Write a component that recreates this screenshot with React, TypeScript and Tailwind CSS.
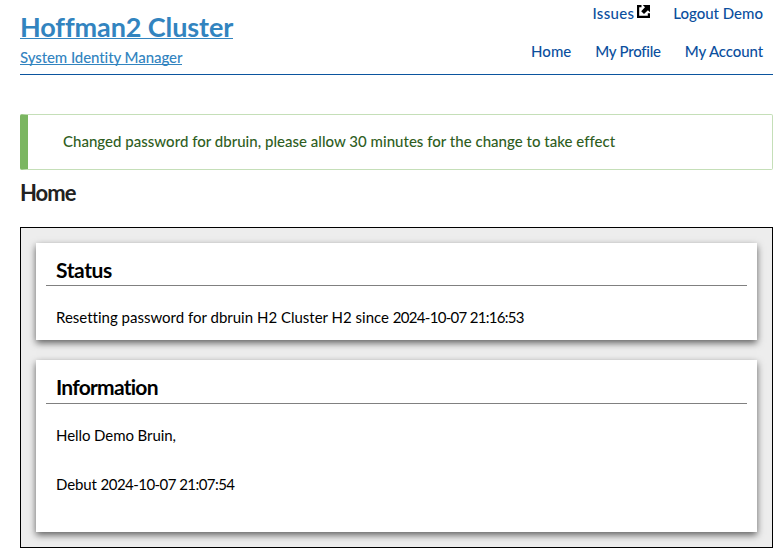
import type { ReactNode } from "react";

function NavLink({ children, className = "" }: { children: ReactNode; className?: string }) {
  return (
    <a href="#" className={`whitespace-nowrap text-[15px] leading-6 font-medium text-[#0b4f9e] ${className}`}>
      {children}
    </a>
  );
}

function ExternalIcon() {
  return (
    <svg width="13" height="13" viewBox="0 0 13 13" className="shrink-0" fill="none" stroke="#000">
      <path d="M4.5 1.1H1.1v10.8h10.8V8.2" strokeWidth="2.2" />
      <path d="M5.8 0H13v7.2L10.9 5.2 7 9 4.2 6.2 8 2.3z" fill="#000" stroke="none" />
    </svg>
  );
}

function Card({ title, titleClass, className, children }: { title: string; titleClass: string; className: string; children: ReactNode }) {
  return (
    <section className={`bg-white px-2.5 shadow-[0_3px_7px_rgba(0,0,0,0.6)] ${className}`}>
      <h2 className={`border-b border-[#808080] pl-2.5 text-[21px] font-bold text-black ${titleClass}`}>{title}</h2>
      {children}
    </section>
  );
}

export default function App() {
  return (
    <div className="h-[555px] overflow-hidden bg-white pr-2.5 pl-5 font-['Lato','Liberation_Sans',sans-serif]">
      <header className="flex h-[75px] justify-between border-b border-[#0b559f]">
        <div className="flex flex-col items-start pt-[9px] text-[#3284bf]">
          <a href="#" className="h-[30px] border-b border-[#3284bf] text-[27px] leading-9 font-bold tracking-[-0.1px] whitespace-nowrap">
            Hoffman2 Cluster
          </a>
          <a href="#" className="mt-1.5 h-5 border-b border-[#3284bf] text-[15px] leading-6 font-medium tracking-[-0.08px] whitespace-nowrap">
            System Identity Manager
          </a>
        </div>
        <nav className="flex flex-col items-end pt-px pr-2.5">
          <div className="flex gap-[23px]">
            <div className="flex gap-[3px]">
              <NavLink className="tracking-[0.3px]">Issues</NavLink>
              <span className="pt-1">
                <ExternalIcon />
              </span>
            </div>
            <NavLink>Logout Demo</NavLink>
          </div>
          <div className="mt-3.5 flex gap-6">
            <NavLink>Home</NavLink>
            <NavLink className="tracking-[-0.25px]">My Profile</NavLink>
            <NavLink className="tracking-[-0.1px]">My Account</NavLink>
          </div>
        </nav>
      </header>

      <div className="mt-[39px] h-14 rounded-xs border border-l-8 border-[#c5dfb8] border-l-[#7bb661] pt-3.5 pl-[35px] text-[15px] leading-6 font-medium tracking-[0.02px] text-[#2f5e1e]">
        <span>Changed password for dbruin, please allow 30 minutes for the change to take effect</span>
      </div>

      <h1 className="mt-2 h-[49px] text-[22px] leading-[30px] font-bold tracking-[-1px] text-[#222]">
        <span>Home</span>
      </h1>

      <main className="flex h-[321px] flex-col gap-5 border border-black bg-[#ededed] p-[15px]">
        <Card title="Status" titleClass="h-[43px] pt-3 leading-[30px] tracking-[-0.4px]" className="h-[97px]">
          <p className="pt-[19px] pl-2.5 text-[15px] leading-6 text-black">
            <span className="[font-variant-ligatures:none]">Resetting password for dbruin H2 Cluster H2 since </span>
            <span className="tracking-[-0.7px]">2024-10-07 21:16:53</span>
          </p>
        </Card>
        <Card title="Information" titleClass="h-11 pt-3 leading-[30px] tracking-[-0.75px]" className="h-[172px]">
          <p className="pt-[19px] pl-2.5 text-[15px] leading-6 tracking-[-0.08px] text-black">
            <span>Hello Demo Bruin,</span>
          </p>
          <p className="pt-[25px] pl-2.5 text-[15px] leading-6 text-black">
            <span className="tracking-[-0.1px]">Debut </span>
            <span className="tracking-[-0.55px]">2024-10-07 21:07:54</span>
          </p>
        </Card>
      </main>
    </div>
  );
}
